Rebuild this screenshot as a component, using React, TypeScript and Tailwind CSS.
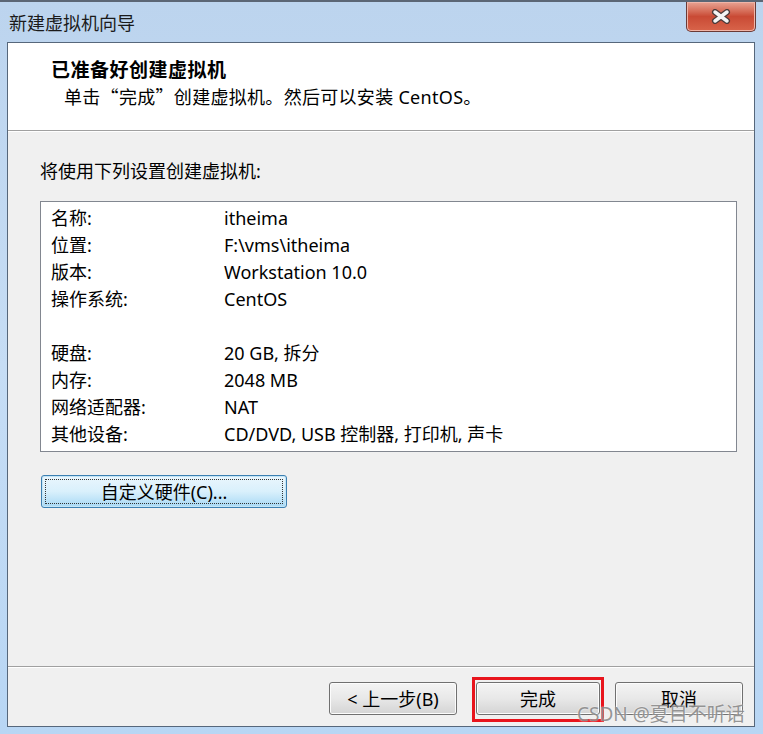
import React from "react";

type Row = { label: string; value: string };

const rows: (Row | null)[] = [
  { label: "名称:", value: "itheima" },
  { label: "位置:", value: "F:\\vms\\itheima" },
  { label: "版本:", value: "Workstation 10.0" },
  { label: "操作系统:", value: "CentOS" },
  null,
  { label: "硬盘:", value: "20 GB, 拆分" },
  { label: "内存:", value: "2048 MB" },
  { label: "网络适配器:", value: "NAT" },
  { label: "其他设备:", value: "CD/DVD, USB 控制器, 打印机, 声卡" },
];

function WinButton({ label, className = "w-[128px]" }: { label: string; className?: string }) {
  return (
    <button
      type="button"
      className={
        "h-[33px] rounded-[3px] border border-[#707070] bg-gradient-to-b from-[#f4f4f4] via-[#e8e8e8] to-[#d4d4d4] text-[18px] leading-none text-black shadow-[inset_0_0_0_1px_#fcfcfc] " +
        className
      }
    >
      {label}
    </button>
  );
}

export default function App() {
  return (
    <div
      className="relative flex h-[734px] w-[763px] flex-col overflow-hidden border-t-2 border-[#5b6675] bg-gradient-to-b from-[#bcd4ee] via-[#c6ddf5] to-[#b8d6f4] text-black"
      style={{ fontFamily: "'Noto Sans', 'Noto Sans CJK SC', sans-serif" }}
    >
      {/* title bar */}
      <div className="flex h-[40px] shrink-0 items-center pl-[9px] text-[18px] text-[#1b1b1b]">
        <span className="mt-[2px]">新建虚拟机向导</span>
      </div>
      <button
        type="button"
        className="absolute right-[7px] top-0 flex h-[30px] w-[70px] items-center justify-center rounded-b-[5px] border border-t-0 border-[#6b3a36] bg-gradient-to-b from-[#e8a393] via-[#c94a35] to-[#d8644a] shadow-[inset_0_0_0_1px_#f0b5a8]"
      >
        <svg width="20" height="15" viewBox="0 0 20 15">
          <path d="M4 3 L16 12 M16 3 L4 12" stroke="#4a3a3a" strokeWidth="6" strokeLinecap="round" />
          <path d="M4 3 L16 12 M16 3 L4 12" stroke="#f4f4f4" strokeWidth="3.5" strokeLinecap="round" />
        </svg>
      </button>

      {/* client area */}
      <div className="mb-[7px] ml-[7px] mr-[8px] flex flex-1 flex-col border border-[#56677b] bg-[#f0f0f0]">
        <div className="h-[88px] shrink-0 border-b border-[#a0a0a0] bg-white pl-[43px] pt-[14px]">
          <div className="text-[19px] font-bold leading-[26px] tracking-[0.5px]">已准备好创建虚拟机</div>
          <div className="pl-[13px] text-[18px] leading-[26px] tracking-[0.3px]">
            单击
            <span style={{ fontFamily: "'Noto Sans CJK SC', sans-serif" }}>“</span>
            完成
            <span style={{ fontFamily: "'Noto Sans CJK SC', sans-serif" }}>”</span>
            创建虚拟机。然后可以安装 CentOS。
          </div>
        </div>
        <div className="h-px bg-white" />

        <div className="flex flex-1 flex-col pl-[32px] pr-[17px]">
          <div className="mt-[27px] text-[18px] leading-[24px]">将使用下列设置创建虚拟机:</div>
          <div className="mt-[18px] h-[251px] border border-[#828790] bg-white pl-[10px] pt-[3px]">
            {rows.map((r, i) =>
              r ? (
                <div key={i} className="grid h-[27px] grid-cols-[173px_1fr] items-center text-[18px]">
                  <span>{r.label}</span>
                  <span>{r.value}</span>
                </div>
              ) : (
                <div key={i} className="h-[27px]" />
              )
            )}
          </div>
          <div className="mt-[23px]">
            <button
              type="button"
              className="relative ml-[1px] h-[33px] w-[246px] rounded-[3px] border border-[#3c7fb1] bg-gradient-to-b from-[#eaf6fd] via-[#d9f0fc] to-[#a7d9f5] text-[18px] leading-none shadow-[inset_0_0_0_1px_#c4e5f6]"
            >
              <span className="absolute inset-[3px] border border-dotted border-[#333]" />
              自定义硬件(C)...
            </button>
          </div>
        </div>

        <div className="h-px bg-[#a0a0a0]" />
        <div className="h-px bg-white" />
        <div className="flex h-[58px] shrink-0 items-start justify-end pr-[11px] pt-[14px]">
          <WinButton label="< 上一步(B)" />
          <div className="relative ml-[19px]">
            <WinButton label="完成" className="w-[124px]" />
            <div className="pointer-events-none absolute -bottom-[7px] -left-[4px] -right-[4px] -top-[5px] border-[3px] border-[#e8141c]" />
          </div>
          <WinButton label="取消" className="ml-[15px] w-[128px]" />
        </div>
      </div>

      <div className="pointer-events-none absolute left-[577px] top-[699px] text-[19px] leading-[26px] text-[#8c8c8c] opacity-90 [text-shadow:0_0_2px_#fff]">
        CSDN @夏目不听话
      </div>
    </div>
  );
}
